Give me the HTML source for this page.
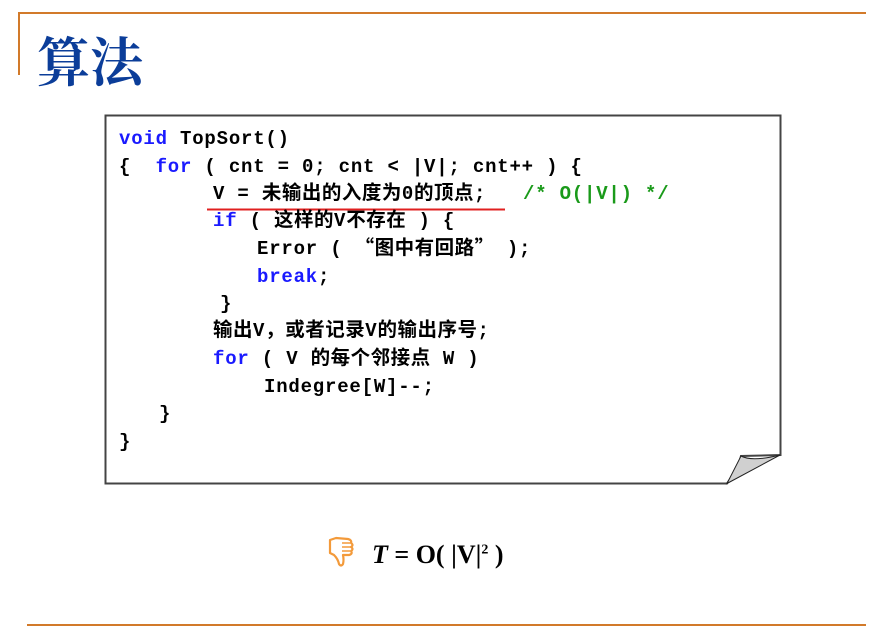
<!DOCTYPE html>
<html><head><meta charset="utf-8"><style>
body{margin:0;width:891px;height:633px;background:#fff;position:relative;overflow:hidden}
.a{position:absolute}
.l{position:absolute;white-space:pre;font:bold 19px "Liberation Mono","Noto Sans CJK SC",monospace;letter-spacing:0.8px;color:#000;line-height:20px}
.c{font-family:"Noto Sans CJK SC","WenQuanYi Zen Hei",sans-serif;letter-spacing:0.5px;font-weight:bold;font-size:19.5px;line-height:0}
.b{color:#1a1aff}
.g{color:#1a9a1a}
</style></head><body>
<div class="a" style="left:18px;top:12px;width:848px;height:2px;background:#d27a2a"></div>
<div class="a" style="left:18px;top:12px;width:2px;height:63px;background:#d27a2a"></div>
<div class="a" style="left:27px;top:624px;width:839px;height:2px;background:#d27a2a"></div>
<div class="a" style="left:37px;top:26px;font:bold 53px 'Noto Serif CJK SC',serif;color:#0b3d99;line-height:66px">算法</div>
<svg class="a" style="left:0;top:0" width="891" height="633">
<path d="M105.5 115.5 H780.5 V455 L741 456 Q738 468 727 483.5 H105.5 Z" fill="#fff" stroke="#444" stroke-width="2"/>
<path d="M727 483.5 L741 456 Q752 462 780 455 Z" fill="#d0d0d0" stroke="#222" stroke-width="1"/>
<line x1="207" y1="209.5" x2="505" y2="209.5" stroke="#e02020" stroke-width="2"/>
</svg>
<div class="l" style="left:119px;top:129px"><span class="b">void</span> TopSort()</div>
<div class="l" style="left:119px;top:157px">{  <span class="b">for</span> ( cnt = 0; cnt &lt; |V|; cnt++ ) {</div>
<div class="l" style="left:213px;top:184px">V = <span class="c">未输出的入度为</span>0<span class="c">的顶点</span>;</div>
<div class="l g" style="left:523px;top:184px">/* O(|V|) */</div>
<div class="l" style="left:213px;top:211px"><span class="b">if</span> ( <span class="c">这样的</span>V<span class="c">不存在</span> ) {</div>
<div class="l" style="left:257px;top:239px">Error ( <span class="c">“图中有回路”</span> );</div>
<div class="l" style="left:257px;top:267px"><span class="b">break</span>;</div>
<div class="l" style="left:220px;top:294px">}</div>
<div class="l" style="left:213px;top:321px"><span class="c">输出</span>V<span class="c">，或者记录</span>V<span class="c">的输出序号</span>;</div>
<div class="l" style="left:213px;top:349px"><span class="b">for</span> ( V <span class="c">的每个邻接点</span> W )</div>
<div class="l" style="left:264px;top:377px">Indegree[W]--;</div>
<div class="l" style="left:159px;top:404px">}</div>
<div class="l" style="left:119px;top:432px">}</div>
<svg class="a" style="left:328px;top:536px" width="28" height="32" viewBox="0 0 28 32">
<path d="M2 4 L8 2 L20 3 Q24 4 23 7 Q26 9 23 11 Q26 13 23 15 Q25 18 21 19 L15 19 Q16 24 15 28 Q13 31 11 28 Q10 23 6 19 L2 17 Z" fill="#fff" stroke="#f39a3a" stroke-width="2.2" stroke-linejoin="round"/>
<path d="M14 7 H22 M14 11 H23 M14 15 H22" stroke="#f39a3a" stroke-width="1.5"/>
</svg>
<div class="a" style="left:372px;top:540px;font:bold 26px 'Liberation Serif',serif;color:#000;white-space:pre"><i>T</i> = O( |V|<sup style="font-size:14px">2</sup> )</div>
</body></html>
